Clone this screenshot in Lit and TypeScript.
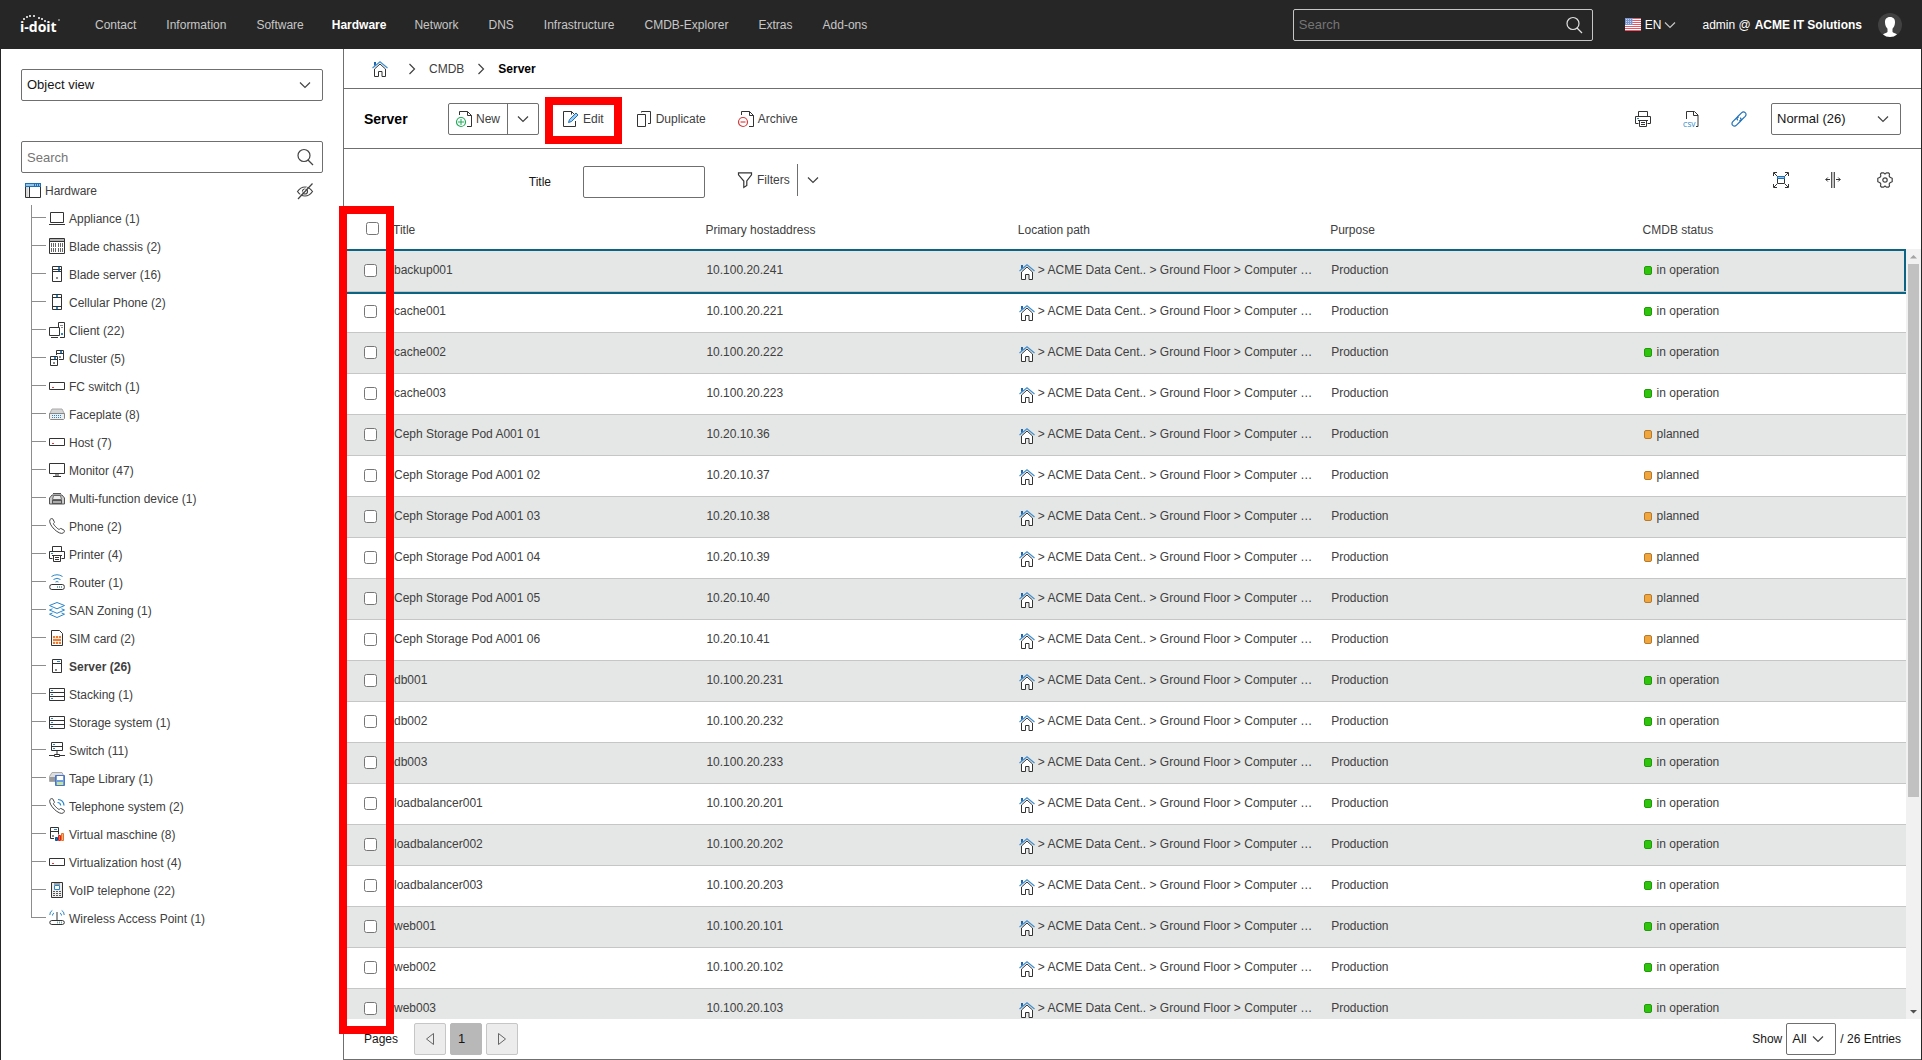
import { LitElement, html, svg, css, type TemplateResult } from "lit";
import { customElement, property } from "lit/decorators.js";
import { classMap } from "lit/directives/class-map.js";

const D = "#333";
const B = "#2a86c8";
const G = "#8a8a8a";

const handset = svg`<path d="M1 1.6C1.6.8 3 .2 3.7.8l1.6 3c.4.7-.4 1.3-.9 1.8-.4.5 4.6 6 5.8 5.8.6-.3 1-1.2 1.8-.9l3 1.6c.9.6.4 1.9-.6 2.8C10.500 18-1.500 6.500 1 1.600z" fill="#fff" stroke="#444"/>`;
const printer = svg`
  <path d="M3.5 5V.5h9V5M3.5 12.5H.5v-7h15v7h-3" fill="none" stroke=${D}/>
  <path d="M4.5 9.5h7v6h-7z" fill="#fff" stroke=${D}/>
  <path d="M3 9.5h10M6 11.5h4M6 13.5h4" stroke=${D}/>
  <path d="M2 7.5h2" stroke=${B}/>`;
const flatHost = svg`
  <path d="M.5 4.5h15v7H.5z" fill="#fff" stroke=${D}/><path d="M3 9.5h2" stroke="#e0393e"/>`;
const rack = svg`
  <path d="M.5 2.5h15v12H.5zM.5 6.5h15M.5 10.5h15" fill="#fff" stroke=${D}/>
  <path d="M2 4.5h2M2 8.5h2M2 12.5h2" stroke=${B}/>`;

const ICONS: Record<string, TemplateResult> = {
  chevronDown: svg`<path d="M3 5.5l5 5 5-5" fill="none" stroke="currentColor" stroke-width="1.2"/>`,
  chevronRight: svg`<path d="M5.5 3l5 5-5 5" fill="none" stroke="currentColor" stroke-width="1.2"/>`,
  search: svg`<circle cx="7" cy="6.5" r="6" fill="none" stroke="currentColor" stroke-width="1.2"/><path d="M11 11l5 5" stroke="currentColor" stroke-width="1.2"/>`,
  home: svg`
    <path d="M2.5 8L8 3l5.5 5v7.5H10v-5H6.500v5h-4z" fill="#fff" stroke=${D}/>
    <path d="M.5 7L8 .8 15.500 7" fill="none" stroke="#3f8fd0" stroke-width="1.2"/>
    <path d="M2 1h2v2.5L2 5z" fill="#1d66ad"/>`,
  folder: svg`
    <path d="M.5.5h15v14H.5z" fill="#fff" stroke=${D}/>
    <path d="M1 4h2.5v10H1z" fill="#d9d9d9"/><path d="M4.5 4v10.5" stroke=${D}/>
    <path d="M0 0h16v4H0z" fill="#1f6fb5"/><path d="M1 1h8v2H1zM10 1h1v2h-1zM12 1h1v2h-1zM14 1h1v2h-1z" fill="#8ec5ea"/>`,
  eyeOff: svg`
    <path d="M.5 8.5C2.5 5.500 5 4 8 4s5.500 1.500 7.500 4.500C13.500 11.500 11 13 8 13S2.500 11.500.500 8.500z" fill="none" stroke="#444" stroke-width="1.2"/>
    <circle cx="8" cy="8.5" r="2.5" fill="none" stroke="#444" stroke-width="1.2"/>
    <path d="M0 15L14 0" stroke="#fff"/><path d="M1 16L15.500.500" stroke="#444" stroke-width="1.2"/>`,
  laptop: svg`<path d="M1.5 2.5h13v10h-13zM0 14.5h16" fill="none" stroke=${D}/>`,
  chassis: svg`
    <path d="M.5.5h15v15H.5z" fill="#fff" stroke=${D}/><path d="M1 1h14v2H1z" fill="#b5b5b5"/><path d="M0 3.5h16" stroke=${D}/>
    <path d="M2.5 5v9M4.5 5v9M6.5 5v9M9.5 5v9M11.5 5v9M13.5 5v9" stroke="#666" stroke-dasharray="4 1"/>`,
  bladeServer: svg`
    <path d="M3.5.5h9v15h-9zM3.5 3.5h9M3.5 5.5h9" fill="#fff" stroke=${D}/>
    <path d="M10 1v2M10 4v1" stroke=${B} stroke-width="2"/><path d="M7 11h2v2H7z" fill=${G}/>`,
  cellphone: svg`
    <path d="M3.5.5h9v15h-9zM3.5 3.5h9M3.5 12.5h9" fill="#fff" stroke=${D}/>
    <path d="M7 2h2M7 14h2" stroke=${B} stroke-width="2"/>`,
  client: svg`
    <path d="M9.5 5V.5h6v15H11" fill="#fff" stroke=${D}/><path d="M.5 5.5h10v8H.5z" fill="#fff" stroke=${D}/>
    <path d="M2 15.5h7" stroke=${D}/><path d="M11 3.5h3M12 5.5h2" stroke=${G}/><path d="M12 11h2v2h-2z" fill=${B}/>`,
  cluster: svg`
    <path d="M7.5 5V.5h7v9H10M7.5 3.5h7" fill="#fff" stroke=${D}/>
    <path d="M1.5 6.5h7v9h-7zM1.5 9.5h7" fill="#fff" stroke=${D}/>
    <path d="M11 2h2M5 8h2" stroke=${B} stroke-width="2"/><path d="M10 6h2v2h-2zM4 12h2v2H4z" fill=${G}/>`,
  flatHost,
  faceplate: svg`
    <path d="M3 3h10l2.500 5H.5z" fill="#d5d5d5" stroke="#aaa"/><path d="M.5 7.5h15v5l-1 1h-13l-1-1z" fill="#eee" stroke="#888"/>
    <path d="M3 9.5h1M5 9.500h1M7 9.500h1M9 9.500h1M11 9.500h1M3 11.500h1M5 11.500h1M7 11.500h1M9 11.500h1M11 11.500h1" stroke=${B}/>`,
  monitor: svg`<path d="M.5 1.5h15v10H.5z" fill="#fff" stroke=${D}/><path d="M6 13h4M4 14.5h8" stroke=${D}/>`,
  mfd: svg`
    <path d="M4 3.5h8M3 5L.5 8v6h15V8L13 5z" fill="#ccc" stroke="#555"/>
    <path d="M4.5 5.5h7l1 4h-9z" fill="#ececec" stroke="#666"/><path d="M3 10h10v4H3z" fill="#555"/><path d="M4 11h8v2H4z" fill="#aaa"/>`,
  phone: handset,
  printer,
  router: svg`
    <path d="M.8 12.5q0-2 2-2h10.5q2 0 2 2v1q0 2-2 2H2.8q-2 0-2-2z" fill="#fff" stroke=${D}/>
    <path d="M8.5 12v2M10.5 12v2M12.5 12v2" stroke="#7aa"/>
    <path d="M2.5 2.5q5.5-3.5 11 0M4.5 5.5q3.500-2.500 7 0M6.500 8q1.500-1 3 0" fill="none" stroke=${B}/>`,
  layers: svg`
    <path d="M8 .5l7.500 3L8 6.800.500 3.500z" fill="#fff" stroke=${B}/>
    <path d="M3.5 6.800l-3 1.200L8 11.300 15.500 8l-3-1.200M3.500 11l-3 1.200L8 15.500l7.500-3.300-3-1.200" fill="none" stroke=${B}/>`,
  sim: svg`
    <path d="M2.5.5h8l3 3v12h-11z" fill="#fff" stroke=${D}/>
    <path d="M4 6h8v8H4z" fill="#ee7b30"/><path d="M4 8.5h8M4 11.500h8M6.500 6v2M6.500 11v3M9.500 6v2M9.500 11v3" stroke="#fff" stroke-width=".8"/>`,
  server: svg`
    <path d="M3.5 1.5h9v13h-9zM3.5 5.5h9" fill="#fff" stroke=${D}/><path d="M8 3.5h3" stroke=${B}/><path d="M6 11h2v2H6z" fill=${G}/>`,
  rack,
  switch: svg`
    <path d="M2.5.5h11v8h-11zM2.5 4.5h11" fill="#fff" stroke=${D}/><path d="M4 2.5h2M4 6.5h2" stroke=${B}/>
    <path d="M8 9v4M0 13.5h5M11 13.5h5" stroke=${D}/><path d="M5.5 12.5h5v2h-5z" fill="#fff" stroke=${D}/>`,
  tape: svg`
    <path d="M3 2.5h10l2 4v5H.5v-5z" fill="#ddd" stroke="#aaa"/><path d="M1 7h6v4H1z" fill="#999"/>
    <path d="M6.5 5.5h9v10h-9z" fill="#6c9be0" stroke="#4b74c2"/><path d="M8 6h6v4H8z" fill="#fff"/><path d="M8 12h6v3H8z" fill="#c6e39a"/>`,
  telephony: svg`${handset}<path d="M8.5 4.5q3 0 3.200 3M9 1.500q5.500.300 6 6" fill="none" stroke=${B} stroke-width="1.2"/>`,
  vm: svg`
    <path d="M5 12.5H1.5V1.5h8v7M1.5 5.5h8" fill="#fff" stroke=${D}/><path d="M5 3.5h3" stroke=${B}/><path d="M3 9h2v2H3z" fill=${G}/>
    <path d="M6.5 11.5h2v3h-2z" fill="#1a6cb6" stroke="#15508a"/><path d="M9.5 9.5h2v5h-2z" fill="#ff5a4c" stroke="#d22"/><path d="M12.5 7.5h2v7h-2z" fill="#f6b183" stroke="#e8711c"/>`,
  voip: svg`
    <path d="M2.5.5h11v15h-11z" fill="#eee" stroke=${D}/><path d="M5.5 3.5h5v4h-5z" fill="#fff" stroke=${B}/>
    <path d="M5 2h6M4 9.5h2M7 9.5h2M10 9.5h2M4 11.5h2M7 11.5h2M10 11.5h2M4 13.5h2M7 13.5h2M10 13.5h2" stroke="#555"/>`,
  wap: svg`
    <path d="M.8 12.5q0-2 2-2h10.5q2 0 2 2t-2 2H2.8q-2 0-2-2z" fill="#fff" stroke=${D}/><path d="M8 2v8" stroke="#999" stroke-width="2"/>
    <path d="M8.5 11.5v2M10.5 11.5v2M12.5 11.5v2" stroke="#7aa"/>
    <path d="M.8 5q0-3.5 2.5-4.5M3.5 5.5q0-2 1.5-2.5M15.2 5q0-3.5-2.5-4.500M12.500 5.500q0-2-1.500-2.500" fill="none" stroke=${B}/>`,
  newDoc: svg`
    <path d="M3.5 4V.5h8l4 4v11H11M11.5.5v4h4" fill="none" stroke=${D}/>
    <circle cx="5" cy="11" r="4.5" fill="#fff" stroke="#1faa59" stroke-width="1.2"/><path d="M2 11h6M5 8v6" stroke="#1faa59"/>`,
  archive: svg`
    <path d="M3.5 4V.5h8l4 4v11H11M11.5.5v4h4" fill="none" stroke=${D}/>
    <circle cx="5" cy="11" r="4.5" fill="#fff" stroke="#d23c3c" stroke-width="1.2"/><path d="M2.5 11h5" stroke="#ee8d8d" stroke-width="2"/>`,
  edit: svg`
    <path d="M12.5 10v5.500H.5V.5h8L11 3M8.500.500v3" fill="none" stroke=${D}/>
    <path d="M5.500 11.500l1-3L13 2l2 2L8.500 10.500z" fill="#9ccbf0" stroke="#1f6fb5"/>`,
  duplicate: svg`
    <path d="M5.5 1.500V.5h9v12H12M1.5 3.5h8v12h-8z" fill="none" stroke=${D}/>`,
  csv: svg`
    <path d="M3.5 8V.5h8l3.500 3.500v11.500h-2M10.500.500V4.500h4.500" fill="none" stroke=${D}/>
    <text x="0" y="15.5" font-family="Noto Sans, sans-serif" font-size="7" fill=${B}>CSV</text>`,
  link: svg`
    <g fill="none" stroke="#2272b9" stroke-width="1.2">
      <path d="M6.8 9.2C5.5 8 5.8 6.500 6.800 5.500l3.700-3.700c1.200-1.200 2.600-1.200 3.700-.200s1.100 2.500 0 3.700L10.500 9c-.700.700-1.500.800-2.200.600"/>
      <path d="M9.2 6.8c1.3 1.200 1 2.700 0 3.700l-3.700 3.700c-1.200 1.200-2.600 1.200-3.700.200s-1.100-2.500 0-3.700L5.500 7c.700-.700 1.500-.800 2.200-.600"/>
    </g>`,
  filter: svg`<path d="M1.5.8h13v2L9.800 9v4.500l-3 2V9L1.500 2.800z" fill="none" stroke=${D} stroke-width="1.2"/>`,
  expand: svg`
    <path d="M.5 4V.5H4M12 .5h3.500V4M.5 12v3.500H4M12 15.500h3.500V12M1 1l3 3M15 1l-3 3M1 15l3-3M15 15l-3-3" fill="none" stroke=${D}/>
    <path d="M4.5 5.5h7v6h-7z" fill="#fff" stroke=${D}/><path d="M4 4h8v3H4z" fill="#1f6fb5"/><path d="M5 5h6v1H5z" fill="#8ec5ea"/>`,
  columns: svg`
    <path d="M7 0h2v16H7z" fill="#c4c4c4"/><path d="M6.5 0v16M9.5 0v16" stroke="#555"/>
    <path d="M5 7.5H.8M2.8 5.5l-2 2 2 2M11 7.500h4.200M13.200 5.500l2 2-2 2" fill="none" stroke=${D}/>`,
  gear: svg`
    <path d="M4.500.800h2L8 2l1.500-1.200h2L12.500 2l-.3 2 .8 1.300 2.200 1v3.400l-2.200 1-.8 1.300.3 2-1 1.200h-2L8 14l-1.500 1.200h-2L3.500 14l.3-2L3 10.700l-2.200-1V6.300L3 5.300 3.800 4l-.3-2z" fill="none" stroke="#444" stroke-width="1.2"/>
    <circle cx="8" cy="8" r="2.2" fill="none" stroke="#444" stroke-width="1.2"/>`,
  prev: svg`<path d="M11.5 2.5v11L4.5 8z" fill="none" stroke="#666"/>`,
  next: svg`<path d="M4.5 2.5v11l7-5.500z" fill="none" stroke="#666"/>`,
  flag: svg`
    <path d="M0 1h16v13H0z" fill="#fff"/>
    <path d="M0 1.5h16M0 3.5h16M0 5.5h16M0 7.5h16M0 9.5h16M0 11.5h16M0 13.5h16" stroke="#ec5565"/>
    <path d="M0 1h8v7H0z" fill="#7c94cf"/><path d="M1 2.5h7M1 4.5h7M1 6.5h7" stroke="#c9d3ee" stroke-dasharray="1 1"/>`,
};

@customElement("ui-icon")
class UiIcon extends LitElement {
  @property() name = "";
  static styles = css`
    :host { display: block; flex: none; width: 16px; height: 16px; }
    svg { display: block; width: 16px; height: 16px; overflow: visible; }
  `;
  render() {
    return html`<svg viewBox="0 0 16 16" aria-hidden="true">${ICONS[this.name]}</svg>`;
  }
}

const NAV = ["Contact", "Information", "Software", "Hardware", "Network", "DNS", "Infrastructure", "CMDB-Explorer", "Extras", "Add-ons"];

const TREE: [string, string, number][] = [
  ["laptop", "Appliance", 1],
  ["chassis", "Blade chassis", 2],
  ["bladeServer", "Blade server", 16],
  ["cellphone", "Cellular Phone", 2],
  ["client", "Client", 22],
  ["cluster", "Cluster", 5],
  ["flatHost", "FC switch", 1],
  ["faceplate", "Faceplate", 8],
  ["flatHost", "Host", 7],
  ["monitor", "Monitor", 47],
  ["mfd", "Multi-function device", 1],
  ["phone", "Phone", 2],
  ["printer", "Printer", 4],
  ["router", "Router", 1],
  ["layers", "SAN Zoning", 1],
  ["sim", "SIM card", 2],
  ["server", "Server", 26],
  ["rack", "Stacking", 1],
  ["rack", "Storage system", 1],
  ["switch", "Switch", 11],
  ["tape", "Tape Library", 1],
  ["telephony", "Telephone system", 2],
  ["vm", "Virtual maschine", 8],
  ["flatHost", "Virtualization host", 4],
  ["voip", "VoIP telephone", 22],
  ["wap", "Wireless Access Point", 1],
];

const ROWS: [string, string, boolean][] = [
  ["backup001", "10.100.20.241", true],
  ["cache001", "10.100.20.221", true],
  ["cache002", "10.100.20.222", true],
  ["cache003", "10.100.20.223", true],
  ["Ceph Storage Pod A001 01", "10.20.10.36", false],
  ["Ceph Storage Pod A001 02", "10.20.10.37", false],
  ["Ceph Storage Pod A001 03", "10.20.10.38", false],
  ["Ceph Storage Pod A001 04", "10.20.10.39", false],
  ["Ceph Storage Pod A001 05", "10.20.10.40", false],
  ["Ceph Storage Pod A001 06", "10.20.10.41", false],
  ["db001", "10.100.20.231", true],
  ["db002", "10.100.20.232", true],
  ["db003", "10.100.20.233", true],
  ["loadbalancer001", "10.100.20.201", true],
  ["loadbalancer002", "10.100.20.202", true],
  ["loadbalancer003", "10.100.20.203", true],
  ["web001", "10.100.20.101", true],
  ["web002", "10.100.20.102", true],
  ["web003", "10.100.20.103", true],
];

@customElement("app-root")
class AppRoot extends LitElement {
  static styles = css`
    :host {
      display: flex;
      flex-direction: column;
      height: 100vh;
      background: #fff;
      color: #404040;
      font: 12px/16px "Liberation Sans", Arial, sans-serif;
    }
    * { box-sizing: border-box; }
    a { color: inherit; text-decoration: none; }
    button, input, select { font: inherit; color: inherit; margin: 0; }
    button { display: flex; align-items: center; background: none; border: 0; padding: 0; }

    .top {
      flex: none;
      display: flex;
      align-items: center;
      height: 49px;
      padding: 0 20px;
      background: #262626;
      color: #fff;
    }
    .logo { flex: none; width: 60px; height: 24px; }
    .logo svg { display: block; width: 44px; height: 24px; overflow: visible; }
    .nav { display: flex; flex: 1; }
    .nav a { padding: 0 15px; color: #c6c6c6; }
    .nav .active { padding: 0 13px; color: #fff; font-weight: bold; }
    .account { display: flex; align-items: center; }
    .lang { gap: 4px; margin-left: 32px; }
    .lang ui-icon:last-child { margin-left: -3px; color: #c6c6c6; }
    .user { display: flex; gap: 4px; margin-left: 24px; }
    .avatar { width: 24px; height: 24px; margin-left: 16px; }

    .field { display: grid; align-items: center; }
    .field > * { grid-area: 1 / 1; }
    .field ui-icon { justify-self: end; margin-right: 10px; pointer-events: none; color: #444; }
    .box {
      width: 100%;
      height: 32px;
      padding: 0 5px;
      border: 1px solid #6f6f6f;
      border-radius: 2px;
      background: #fff;
      color: #161616;
      font-size: 13px;
      appearance: none;
      outline: 0;
    }
    .box::placeholder { color: #757575; opacity: 1; }
    .top .box { width: 300px; background: #262626; border-color: #c6c6c6; color: #fff; }
    .top .field ui-icon { margin-right: 11px; color: #e0e0e0; }

    .body { flex: 1; display: flex; min-height: 0; border: solid #262626; border-width: 0 1px; }
    .side { flex: none; width: 343px; padding: 20px; border-right: 1px solid #6f6f6f; overflow: hidden; }
    .side .find { margin: 40px 0 4px; }
    .root { display: flex; align-items: center; gap: 4px; height: 28px; padding: 0 10px 0 4px; }
    .root a { flex: 1; }
    .tree { list-style: none; margin: 0 0 0 10px; padding: 0; }
    .tree li { display: flex; height: 28px; line-height: 28px; border-left: 1px solid #8d8d8d; }
    .tree li::before { content: ""; width: 14px; height: 12px; margin-right: 3px; border-bottom: 1px solid #8d8d8d; }
    .tree li:last-child { border-left-color: transparent; }
    .tree li:last-child::before { margin-left: -1px; border-left: 1px solid #8d8d8d; }
    .tree a { display: flex; gap: 4px; }
    .tree ui-icon { margin-top: 5px; }
    .tree .active { font-weight: bold; }

    .main { flex: 1; min-width: 0; display: flex; flex-direction: column; border-bottom: 1px solid #6f6f6f; }
    .crumbs { flex: none; display: flex; align-items: center; height: 40px; padding: 0 28px; gap: 9px; border-bottom: 1px solid #6f6f6f; }
    .crumbs > :first-child { margin-right: 7px; }
    .crumbs strong { color: #000; }
    .tools { flex: none; display: flex; align-items: center; gap: 16px; height: 60px; padding: 0 20px; border-bottom: 1px solid #6f6f6f; }
    h1 { margin: 0 8px 0 0; width: 60px; font-size: 14px; line-height: 16px; color: #000; }
    .btn { height: 32px; padding: 0 8px; gap: 4px; }
    .split { display: flex; border: 1px solid #6f6f6f; border-radius: 2px; }
    .split .btn { height: 30px; padding: 0 7px; }
    .split .btn + .btn { border-left: 1px solid #6f6f6f; }
    .marked { position: relative; }
    .mark { position: absolute; z-index: 2; border: 8px solid #f00; pointer-events: none; }
    .marked .mark { inset: -6px -10px -9px; }
    .grow { flex: 1; }
    .state { width: 130px; }

    .filters { flex: none; display: flex; align-items: flex-start; height: 57px; padding: 15px 20px 0; }
    .filters label { display: flex; align-items: center; justify-content: flex-end; width: 341px; gap: 32px; padding-top: 2px; color: #161616; }
    .filters .box { width: 122px; }
    .filters .filter { margin-left: 24px; }
    .filters .filter .btn { padding-right: 7px; }
    .filters .filter .btn:last-child { padding-left: 7px; border-left: 1px solid #6f6f6f; }
    .filter, .viewtools { display: flex; }
    .viewtools { gap: 20px; margin-left: auto; }

    .list { flex: 1; min-height: 0; position: relative; display: flex; }
    .list > .mark { left: -5px; top: 0; bottom: -15px; width: 55px; }
    .rows { flex: 1; min-width: 0; overflow: hidden; }
    table { width: 100%; table-layout: fixed; border-collapse: separate; border-spacing: 0; }
    .pick { width: 49px; }
    .wide { width: 20%; }
    th { height: 45px; padding: 2px 0 0; text-align: left; font-weight: normal; }
    th:first-child { padding: 0 0 0 22px; }
    td { height: 41px; padding: 0 0 2px 1px; border-bottom: 1px solid #c6c6c6; white-space: nowrap; overflow: hidden; }
    td:first-child { padding-left: 20px; }
    tbody tr:nth-child(odd) td { background: #e5e7e6; }
    .current { position: relative; z-index: 1; }
    .current td { box-shadow: 0 -2px #0b6484, 0 2px #0b6484; }
    .current td:last-child { box-shadow: 0 -2px #0b6484, 0 2px #0b6484, inset -2px 0 #0b6484; }
    input[type="checkbox"] { display: block; width: 13px; height: 13px; }
    .cell { display: flex; align-items: center; }
    .path { gap: 3px; }
    .path ui-icon { margin-top: 3px; }
    .dot { width: 8px; height: 9px; margin-right: 5px; border: 1px solid #239a0c; border-radius: 2px; background: #2fc40c; }
    .planned { border-color: #b57a2e; background: #f0a63c; }
    .bar { flex: none; display: flex; flex-direction: column; width: 15px; margin-top: 43px; background: #f1f1f1; }
    .bar svg { display: block; width: 15px; height: 15px; }
    .track { flex: 1; padding: 0 2px; }
    .thumb { height: 72%; background: #c1c1c1; }

    .foot { flex: none; display: flex; align-items: center; gap: 4px; height: 40px; padding: 0 20px; color: #161616; }
    .foot .page { width: 32px; height: 32px; justify-content: center; border: 1px solid #c6c6c6; border-radius: 2px; background: #ececec; }
    .foot .on { justify-content: flex-start; padding-left: 7px; border-color: #b8b8b8; background: #b8b8b8; font-size: 13px; }
    .pager { display: flex; gap: 4px; margin: 0 auto 0 12px; }
    .amount { width: 50px; }
  `;

  private logo() {
    const dots = [[4, 6], [7, 4], [10, 3], [14, 3], [19, 5], [22, 6], [25, 8]];
    return html`<a class="logo" href="#" aria-label="i-doit">
      <svg viewBox="0 0 44 24">
        ${dots.map(([x, y]) => svg`<circle cx=${x} cy=${y} r="1" fill="#fff"/>`)}
        <circle cx="39" cy="7" r="1" fill="#999"/>
        <text x="0" y="19" font-family="Open Sans, sans-serif" font-weight="bold" font-size="14" fill="#fff">i-doit</text>
      </svg></a>`;
  }

  private iconButton(name: string, label: string) {
    return html`<button class="btn" aria-label=${label}><ui-icon name=${name}></ui-icon></button>`;
  }

  private arrow(up: boolean) {
    return html`<svg viewBox="0 0 15 15" aria-hidden="true">
      <path d=${up ? "M4 9.5h7L7.5 6z" : "M4 6h7L7.5 9.5z"} fill=${up ? "#a3a3a3" : "#505050"} /></svg>`;
  }

  render() {
    return html`
      <header class="top">
        ${this.logo()}
        <nav class="nav">
          ${NAV.map((n) => html`<a href="#" class=${classMap({ active: n === "Hardware" })}>${n}</a>`)}
        </nav>
        <div class="account">
          <div class="field">
            <input class="box" type="search" placeholder="Search" aria-label="Search" />
            <ui-icon name="search"></ui-icon>
          </div>
          <button class="lang"><ui-icon name="flag"></ui-icon>EN<ui-icon name="chevronDown"></ui-icon></button>
          <a class="user" href="#"><span>admin @</span><strong>ACME IT Solutions</strong></a>
          <svg class="avatar" viewBox="0 0 24 24" aria-hidden="true">
            <circle cx="12" cy="12" r="12" fill="#414141" />
            <path d="M12 4c3.5 0 5.2 2.300 5 5.500-.1 3-1.200 4.800-2.500 6.300V19c1.200 1.200 3.500 1 4.500 2.500Q16 24 12 24t-7-2.500C6 20 8.300 20.200 9.500 19v-3.200C8.200 14.300 7.100 12.500 7 9.500 6.800 6.300 8.500 4 12 4z" fill="#fff" />
          </svg>
        </div>
      </header>
      <div class="body">
        <aside class="side">
          <div class="field">
            <select class="box" aria-label="View"><option>Object view</option></select>
            <ui-icon name="chevronDown"></ui-icon>
          </div>
          <div class="field find">
            <input class="box" type="search" placeholder="Search" aria-label="Search objects" />
            <ui-icon name="search"></ui-icon>
          </div>
          <div class="root">
            <ui-icon name="folder"></ui-icon><a href="#">Hardware</a>
            <button aria-label="Hide empty"><ui-icon name="eyeOff"></ui-icon></button>
          </div>
          <ul class="tree">
            ${TREE.map(([icon, label, n]) => html`<li>
              <a href="#" class=${classMap({ active: label === "Server" })}><ui-icon name=${icon}></ui-icon>${label} (${n})</a>
            </li>`)}
          </ul>
        </aside>
        <main class="main">
          <nav class="crumbs">
            <a href="#" aria-label="Home"><ui-icon name="home"></ui-icon></a>
            <ui-icon name="chevronRight"></ui-icon>
            <a href="#">CMDB</a>
            <ui-icon name="chevronRight"></ui-icon>
            <strong>Server</strong>
          </nav>
          <div class="tools">
            <h1>Server</h1>
            <div class="split">
              <button class="btn"><ui-icon name="newDoc"></ui-icon>New</button>
              ${this.iconButton("chevronDown", "More")}
            </div>
            <div class="marked">
              <button class="btn"><ui-icon name="edit"></ui-icon>Edit</button>
              <span class="mark"></span>
            </div>
            <button class="btn"><ui-icon name="duplicate"></ui-icon>Duplicate</button>
            <button class="btn"><ui-icon name="archive"></ui-icon>Archive</button>
            <span class="grow"></span>
            ${this.iconButton("printer", "Print")}
            ${this.iconButton("csv", "Export")}
            ${this.iconButton("link", "Link")}
            <div class="field state">
              <select class="box" aria-label="Status"><option>Normal (26)</option></select>
              <ui-icon name="chevronDown"></ui-icon>
            </div>
          </div>
          <div class="filters">
            <label>Title<input class="box" type="text" /></label>
            <div class="filter">
              <button class="btn"><ui-icon name="filter"></ui-icon>Filters</button>
              ${this.iconButton("chevronDown", "More filters")}
            </div>
            <div class="viewtools">
              ${this.iconButton("expand", "Expand")}
              ${this.iconButton("columns", "Column width")}
              ${this.iconButton("gear", "Settings")}
            </div>
          </div>
          <div class="list">
            <div class="rows">
              <table>
                <colgroup>
                  <col class="pick" /><col class="wide" /><col class="wide" /><col class="wide" /><col class="wide" /><col />
                </colgroup>
                <thead>
                  <tr>
                    <th><input type="checkbox" aria-label="Select all" /></th>
                    <th>Title</th>
                    <th>Primary hostaddress</th>
                    <th>Location path</th>
                    <th>Purpose</th>
                    <th>CMDB status</th>
                  </tr>
                </thead>
                <tbody>
                  ${ROWS.map(([title, ip, live], i) => html`<tr class=${classMap({ current: i === 0 })}>
                    <td><input type="checkbox" aria-label=${title} /></td>
                    <td>${title}</td>
                    <td>${ip}</td>
                    <td><div class="cell path"><ui-icon name="home"></ui-icon>&gt; ACME Data Cent.. &gt; Ground Floor &gt; Computer …</div></td>
                    <td>Production</td>
                    <td><div class="cell"><span class=${classMap({ dot: true, planned: !live })}></span>${live ? "in operation" : "planned"}</div></td>
                  </tr>`)}
                </tbody>
              </table>
            </div>
            <div class="bar">${this.arrow(true)}<div class="track"><div class="thumb"></div></div>${this.arrow(false)}</div>
            <span class="mark"></span>
          </div>
          <footer class="foot">
            <span>Pages</span>
            <div class="pager">
              <button class="page" aria-label="Previous page"><ui-icon name="prev"></ui-icon></button>
              <button class="page on">1</button>
              <button class="page" aria-label="Next page"><ui-icon name="next"></ui-icon></button>
            </div>
            <label for="amount">Show</label>
            <div class="field amount">
              <select class="box" id="amount"><option>All</option></select>
              <ui-icon name="chevronDown"></ui-icon>
            </div>
            <span>/ 26 Entries</span>
          </footer>
        </main>
      </div>
    `;
  }
}
